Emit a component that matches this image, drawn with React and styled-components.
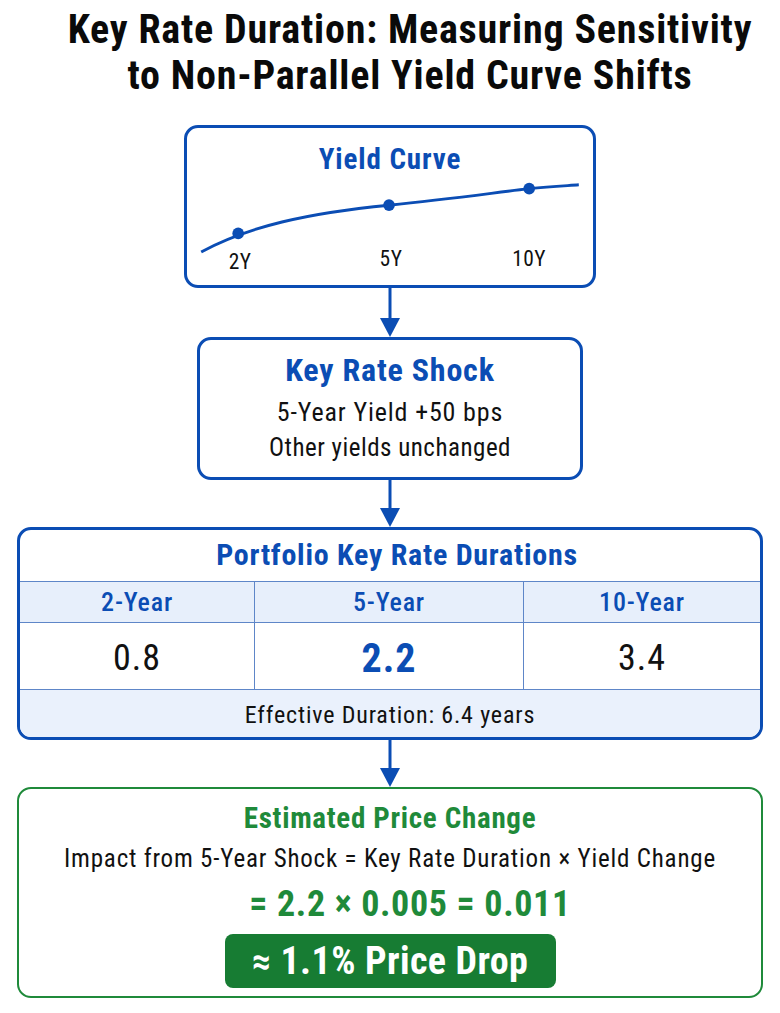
import React from "react"
import styled, { createGlobalStyle } from "styled-components"

const GlobalStyle = createGlobalStyle`
  body {
    margin: 0;
    background: #ffffff;
    font-family: "Roboto Condensed", "Liberation Sans Narrow", "DejaVu Sans Condensed", Roboto, sans-serif;
    color: #111111;
  }
`

const BLUE = "#0b4db4"
const GREEN = "#1f8a3a"

const Page = styled.div`
  width: 780px;
  height: 1013px;
  display: flex;
  flex-direction: column;
  align-items: center;
  overflow: hidden;
`

const Title = styled.h1`
  margin: 0;
  padding: 7px 0 0 40px;
  width: 100%;
  box-sizing: border-box;
  text-align: center;
  font-size: 40px;
  line-height: 46px;
  letter-spacing: 0.8px;
  font-weight: 700;
  color: #0a0a0a;
  height: 125px;
`

const Card = styled.div`
  box-sizing: border-box;
  width: ${(p) => p.$w}px;
  height: ${(p) => p.$h}px;
  border: ${(p) => (p.$green ? `2px solid ${GREEN}` : `3px solid ${BLUE}`)};
  border-radius: 14px;
  display: flex;
  flex-direction: column;
  align-items: center;
  overflow: hidden;
`

const CardTitle = styled.div`
  font-weight: 700;
  font-size: ${(p) => p.$size}px;
  letter-spacing: ${(p) => p.$ls || 0}px;
  color: ${(p) => (p.$green ? GREEN : BLUE)};
  padding-top: ${(p) => p.$top || 0}px;
  padding-left: ${(p) => p.$shift || 0}px;
  line-height: 34px;
`

const Line = styled.div`
  font-size: ${(p) => p.$size}px;
  letter-spacing: ${(p) => p.$ls || 0}px;
  line-height: ${(p) => p.$lh || 34}px;
  margin-top: ${(p) => p.$mt || 0}px;
  color: #111111;
`

const TableWrap = styled.div`
  width: 100%;
  display: grid;
  grid-template-columns: 236fr 271fr 239fr;
  border-top: 1px solid #5e86c8;
  margin-top: 9px;
`

const HeadCell = styled.div`
  background: #e7effb;
  height: 40px;
  display: flex;
  align-items: center;
  justify-content: center;
  font-size: 26px;
  font-weight: 500;
  letter-spacing: 0.8px;
  color: ${BLUE};
  border-bottom: 1px solid #5e86c8;
  border-left: ${(p) => (p.$first ? "none" : "1px solid #5e86c8")};
`

const ValueCell = styled.div`
  height: 67px;
  padding-top: 4px;
  box-sizing: border-box;
  display: flex;
  align-items: center;
  justify-content: center;
  font-size: ${(p) => (p.$hi ? 40 : 36)}px;
  font-weight: ${(p) => (p.$hi ? 700 : 400)};
  letter-spacing: 1px;
  color: ${(p) => (p.$hi ? BLUE : "#111111")};
  border-bottom: 1px solid #5e86c8;
  border-left: ${(p) => (p.$first ? "none" : "1px solid #5e86c8")};
`

const Footer = styled.div`
  grid-column: 1 / -1;
  background: #eaf1fc;
  height: 49px;
  display: flex;
  align-items: center;
  justify-content: center;
  font-size: 24px;
  letter-spacing: 0.85px;
  color: #111111;
`

const Equation = styled.div`
  font-size: 36px;
  font-weight: 700;
  letter-spacing: 0.65px;
  color: ${GREEN};
  line-height: 44px;
  margin-top: 3px;
  padding-left: 40px;
`

const Badge = styled.div`
  margin-top: 8px;
  width: 331px;
  height: 54px;
  border-radius: 8px;
  background: #177c33;
  color: #ffffff;
  font-size: 38px;
  font-weight: 700;
  letter-spacing: 0.4px;
  display: flex;
  align-items: center;
  justify-content: center;
`

const Arrow = ({ h }) => (
  <svg width="24" height={h} viewBox={`0 0 24 ${h}`} style={{ display: "block" }}>
    <line x1="12" y1="0" x2="12" y2={h - 16} stroke={BLUE} strokeWidth="3" />
    <polygon points={`2,${h - 19} 22,${h - 19} 12,${h}`} fill={BLUE} />
  </svg>
)

const CurveChart = () => (
  <svg width="406" height="112" viewBox="0 0 406 112" style={{ display: "block" }}>
    <path
      d="M9 78 C57 52, 118 38, 202 30 C262 24, 304 18, 346 13 C368 11, 384 10, 397 9"
      fill="none"
      stroke={BLUE}
      strokeWidth="3"
    />
    <circle cx="47" cy="59" r="6" fill={BLUE} />
    <circle cx="202" cy="30" r="6" fill={BLUE} />
    <circle cx="346" cy="13" r="6" fill={BLUE} />
    <g fontSize="22" fill="#111111" textAnchor="middle" fontFamily="inherit" letterSpacing="0.5">
      <text x="49" y="96">2Y</text>
      <text x="204" y="92">5Y</text>
      <text x="346" y="92">10Y</text>
    </g>
  </svg>
)

const App = () => (
  <Page>
    <GlobalStyle />
    <Title>
      Key Rate Duration: Measuring Sensitivity
      <br />
      to Non-Parallel Yield Curve Shifts
    </Title>

    <Card $w={412} $h={163}>
      <CardTitle $top={14} $size={29} $ls={0.9}>Yield Curve</CardTitle>
      <CurveChart />
    </Card>
    <Arrow h={49} />

    <Card $w={386} $h={143}>
      <CardTitle $top={13} $size={32} $ls={0.8}>Key Rate Shock</CardTitle>
      <Line $size={26} $ls={0.85} $lh={40} $mt={5}>5-Year Yield +50 bps</Line>
      <Line $size={25} $ls={0.5} $lh={32}>Other yields unchanged</Line>
    </Card>
    <Arrow h={47} />

    <Card $w={746} $h={213}>
      <CardTitle $top={8} $size={30} $ls={0.75} $shift={14}>Portfolio Key Rate Durations</CardTitle>
      <TableWrap>
        <HeadCell $first>2-Year</HeadCell>
        <HeadCell>5-Year</HeadCell>
        <HeadCell>10-Year</HeadCell>
        <ValueCell $first>0.8</ValueCell>
        <ValueCell $hi>2.2</ValueCell>
        <ValueCell>3.4</ValueCell>
        <Footer>Effective Duration: 6.4 years</Footer>
      </TableWrap>
    </Card>
    <Arrow h={47} />

    <Card $w={746} $h={211} $green>
      <CardTitle $green $top={12} $size={29} $ls={0.7}>Estimated Price Change</CardTitle>
      <Line $size={25} $ls={0.8} $lh={40} $mt={4}>
        Impact from 5-Year Shock = Key Rate Duration × Yield Change
      </Line>
      <Equation>= 2.2 × 0.005 = 0.011</Equation>
      <Badge>≈ 1.1% Price Drop</Badge>
    </Card>
  </Page>
)

export default App
